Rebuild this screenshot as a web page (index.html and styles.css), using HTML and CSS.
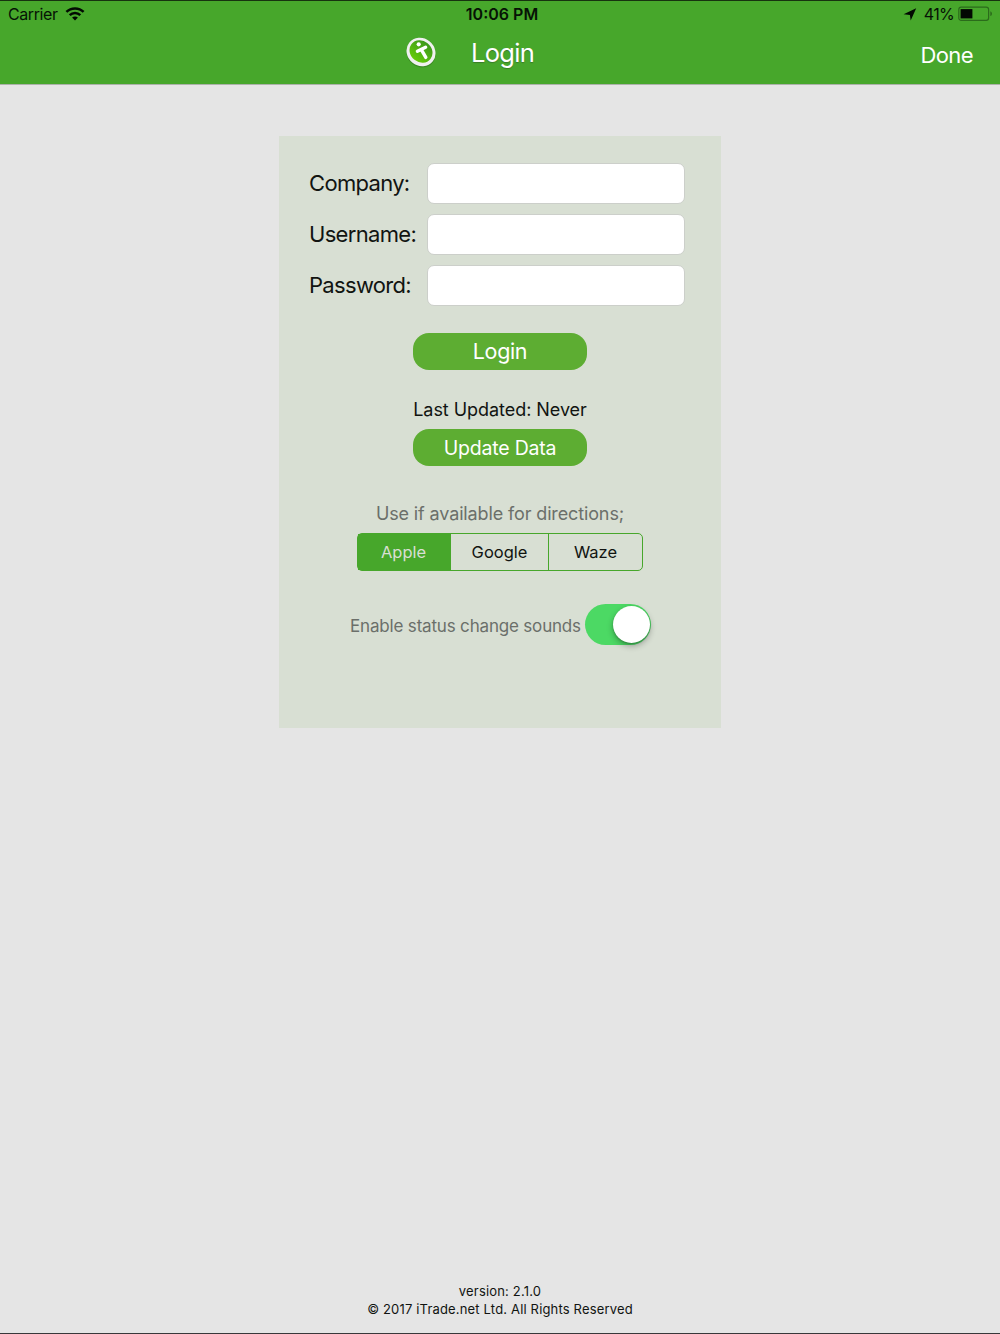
FILE: index.html
```html
<!DOCTYPE html>
<html lang="en">
<head>
<meta charset="utf-8">
<title>Login</title>
<link rel="stylesheet" href="styles.css">
</head>
<body>
<header class="header">
  <div class="status">
    <div class="status-left">
      <span class="carrier">Carrier</span>
      <svg class="wifi" width="20" height="14" viewBox="0 0 20 14" fill="none" stroke="#020902" stroke-width="2.5">
        <path d="M1.4 4.9C6.1.3 13.9.3 18.6 4.9"/>
        <path d="M4.7 8.2C7.7 5.3 12.3 5.3 15.3 8.2"/>
        <path d="M10 13.4 7.1 10.5C8.7 9 11.3 9 12.9 10.5Z" fill="#020902" stroke="none"/>
      </svg>
    </div>
    <span class="clock">10:06 PM</span>
    <div class="status-right">
      <svg class="location" width="14" height="13" viewBox="0 0 14 13"><path d="M13.2 .3 7.7 12.5 6.9 7.1 .6 6.2Z" fill="#020902"/></svg>
      <span class="percent">41%</span>
      <svg class="battery" width="35" height="16" viewBox="0 0 35 16">
        <rect x=".8" y="1.1" width="29.8" height="13.2" rx="2.4" fill="none" stroke="#2b6b1b" stroke-width="1.2"/>
        <rect x="2.6" y="3.1" width="11.8" height="9.3" fill="#020902"/>
        <path d="M32.3 5.2C34.5 6 34.5 9.3 32.3 10.1Z" fill="#2b6b1b"/>
      </svg>
    </div>
  </div>
  <div class="nav">
    <div class="brand">
      <svg class="logo" width="32" height="32" viewBox="0 0 32 32">
        <defs><linearGradient id="leaf" x1="0" y1="0" x2="0" y2="1"><stop offset="0" stop-color="#3c981c"/><stop offset="1" stop-color="#65cb08"/></linearGradient></defs>
        <g transform="rotate(38 16 16)">
          <ellipse cx="16.7" cy="16.9" rx="15" ry="13.8" fill="#34761f" opacity=".6"/>
          <ellipse cx="16" cy="16" rx="15" ry="13.7" fill="#f0f0f0"/>
          <ellipse cx="15.7" cy="15.6" rx="12" ry="10.6" fill="url(#leaf)"/>
        </g>
        <circle cx="13.7" cy="8.3" r="2.1" fill="#fff"/>
        <path d="M12.4 15.2 20.6 11.2M16.3 13.7 20.8 21.4" fill="none" stroke="#fff" stroke-width="3.4" stroke-linecap="round"/>
      </svg>
      <h1 class="title">Login</h1>
    </div>
    <span class="done">Done</span>
  </div>
</header>
<main class="card">
  <div class="form">
    <label class="label company" for="company">Company:</label><input class="field" id="company" type="text">
    <label class="label username" for="username">Username:</label><input class="field" id="username" type="text">
    <label class="label password" for="password">Password:</label><input class="field" id="password" type="password">
  </div>
  <button class="button login"><span>Login</span></button>
  <div class="updated"><span>Last Updated: Never</span></div>
  <button class="button update"><span>Update Data</span></button>
  <div class="directions"><span>Use if available for directions;</span></div>
  <div class="segments">
    <div class="segment selected"><span>Apple</span></div>
    <div class="segment"><span>Google</span></div>
    <div class="segment"><span>Waze</span></div>
  </div>
  <div class="sounds">
    <span class="sounds-text">Enable status change sounds</span>
    <div class="switch"><div class="knob"></div></div>
  </div>
</main>
<footer class="footer">
  <div class="version">version: 2.1.0</div>
  <div class="copyright">© 2017 iTrade.net Ltd. All Rights Reserved</div>
</footer>
</body>
</html>
```
FILE: styles.css
```css
* { box-sizing: border-box; }
body {
  margin: 0;
  height: 1334px;
  display: flex;
  flex-direction: column;
  align-items: center;
  background: #e5e5e5;
  border-bottom: 1px solid #38383a;
  font-family: Inter, "Liberation Sans", sans-serif;
  color: #111411;
  white-space: nowrap;
}
.header {
  width: 100%;
  height: 85px;
  background: #47a72b;
  border-top: 1px solid #17330f;
  border-bottom: 1px solid #acb2aa;
}
.status {
  height: 26px;
  display: grid;
  grid-template-columns: 1fr auto 1fr;
  align-items: center;
  padding: 0 8px;
  font-size: 16px;
  line-height: 26px;
  color: #061205;
}
.status-left, .status-right { display: flex; align-items: center; }
.status-left { gap: 7px; }
.status-right { justify-content: flex-end; margin-right: -1px; }
.carrier { letter-spacing: -.4px; }
.wifi { margin-top: -1px; }
.clock { font-weight: 600; margin-left: 4px; }
.percent { margin: 0 4px 0 7px; letter-spacing: -.7px; }
.nav {
  height: 52px;
  display: grid;
  grid-template-columns: 1fr auto;
  align-items: center;
  padding: 0 27px 0 405px;
  color: #fff;
}
.brand { display: flex; align-items: center; gap: 34px; }
.logo { margin-bottom: 2px; }
.title { margin: 0; font-size: 25.5px; font-weight: 400; letter-spacing: -.7px; line-height: 32px; text-shadow: 0 1px 1px #397c29; }
.done { font-size: 22px; letter-spacing: -.6px; line-height: 28px; margin-top: 4px; }
.card {
  width: 442px;
  height: 592px;
  margin-top: 51px;
  padding: 27px 36px 0 30px;
  background: #d8dfd3;
  display: flex;
  flex-direction: column;
  align-items: center;
}
.form {
  width: 100%;
  display: grid;
  grid-template-columns: 118px 258px;
  row-gap: 10px;
  align-items: center;
}
.label { font-size: 22px; letter-spacing: -.68px; line-height: 39px; padding-bottom: 1px; }
.field {
  width: 258px;
  height: 41px;
  border: 1px solid #cccfca;
  border-radius: 7px;
  background: #fff;
}
.button, .updated, .directions, .segments, .sounds { margin-left: 6px; }
.button {
  width: 174px;
  height: 37px;
  padding: 0;
  border: 0;
  border-radius: 16px;
  background: #5dad32;
  color: #fff;
  font-family: inherit;
  line-height: 37px;
}
.login { margin-top: 27px; font-size: 21.5px; letter-spacing: -.35px; }
.updated { margin-top: 28px; height: 24px; line-height: 24px; font-size: 18px; letter-spacing: -.05px; }
.update { margin-top: 7px; font-size: 19.5px; letter-spacing: -.2px; line-height: 38px; }
.directions { margin-top: 36px; height: 24px; line-height: 24px; font-size: 18px; letter-spacing: -.13px; color: #6b6f6a; }
.segments {
  width: 286px;
  height: 38px;
  margin-top: 7px;
  display: grid;
  grid-template-columns: 93px 97px 94px;
  border: 1px solid #47a72b;
  border-radius: 5px;
}
.segment { text-align: center; line-height: 36px; font-size: 16.5px; }
.segment + .segment + .segment { border-left: 1px solid #47a72b; }
.selected { background: #47a72b; color: #d8dfd3; }
.selected span { margin-right: 2px; }
.sounds { display: flex; align-items: center; gap: 4px; margin: 33px 0 0 7px; height: 41px; }
.sounds-text { font-size: 17px; letter-spacing: -.18px; color: #6b6f6a; padding-top: 2px; }
.switch {
  width: 66px;
  height: 41px;
  padding: 2px 1px;
  margin-top: -1px;
  display: flex;
  justify-content: flex-end;
  border-radius: 21px;
  background: #4cd964;
}
.knob { width: 37px; height: 37px; border-radius: 50%; background: #fff; box-shadow: 0 3px 6px rgba(0,0,0,.3), 0 1px 2px rgba(0,0,0,.2); }
.footer { margin-top: auto; padding-bottom: 15px; text-align: center; font-size: 13px; letter-spacing: .17px; line-height: 18px; }
```
